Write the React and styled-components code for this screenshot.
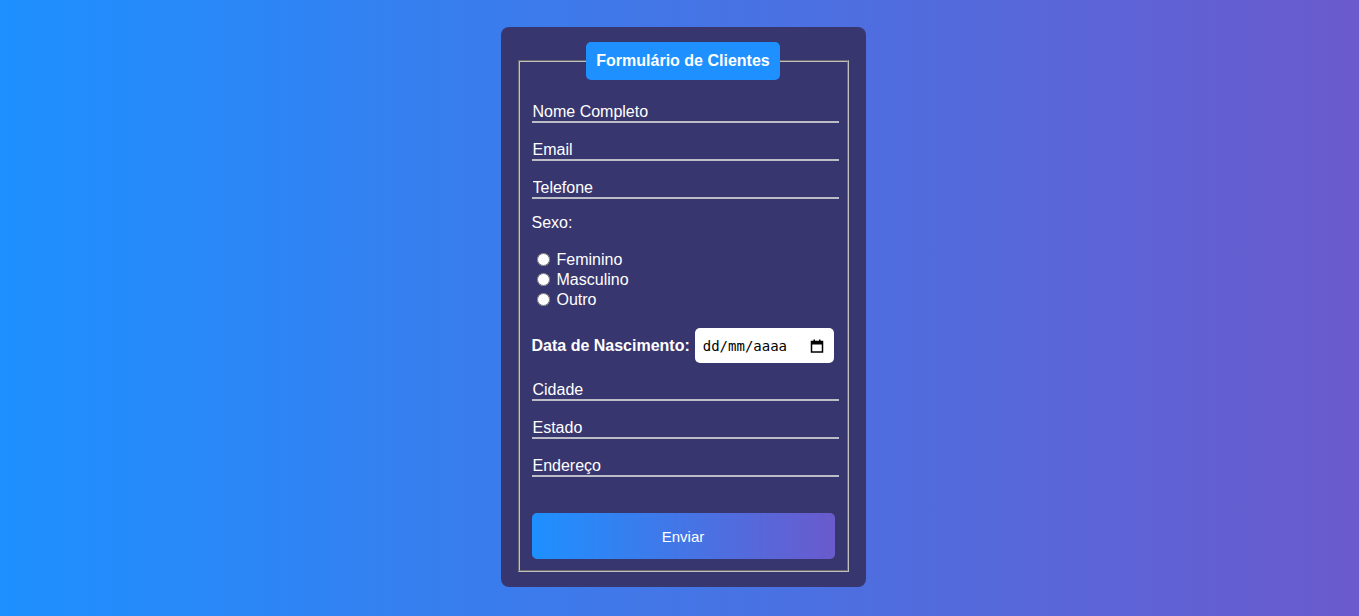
import React from 'react'
import styled, { createGlobalStyle } from 'styled-components'

const GlobalStyle = createGlobalStyle`
  * {
    box-sizing: border-box;
  }
  body {
    margin: 0;
    font-family: "Liberation Sans", Arial, sans-serif;
    background: linear-gradient(to right, #1e90ff, #6a5acd);
    min-height: 100vh;
  }
`

const Page = styled.div`
  min-height: 100vh;
  display: flex;
  align-items: flex-start;
  justify-content: center;
  padding: 27px 0 0 7px;
`

const Card = styled.form`
  width: 365px;
  background: #38366f;
  border-radius: 8px;
  padding: 15px;
`

const FieldsetSt = styled.fieldset`
  margin: 0 2px;
  border: 2px groove #c0c0c0;
  padding: 6px 12px 11px;
`

const Legend = styled.legend`
  margin: 0 auto;
  background: #1e90ff;
  color: white;
  font-weight: bold;
  font-size: 16px;
  padding: 10px;
  border-radius: 5px;
`

const Fields = styled.div`
  display: flex;
  flex-direction: column;
  padding-top: 15px;
`

const TextInput = styled.input`
  display: block;
  width: calc(100% + 4px);
  height: 22px;
  padding: 2px 2px 0 1px;
  margin: 0 0 ${p => p.$gap ?? 16}px;
  background: transparent;
  border: none;
  border-bottom: 2px solid #bdbdc8;
  color: white;
  font-family: "Liberation Sans", Arial, sans-serif;
  font-size: 16px;
  outline: none;

  &::placeholder {
    color: white;
    opacity: 1;
  }
`

const GroupLabel = styled.label`
  color: white;
  font-size: 16px;
  line-height: 18px;
  margin: 0 0 17px;
`

const RadioList = styled.div`
  display: flex;
  flex-direction: column;
  margin-bottom: 19px;
`

const RadioRow = styled.label`
  display: flex;
  align-items: center;
  height: 20px;
  color: white;
  font-size: 16px;
  padding-top: 1px;

  input {
    width: 13px;
    height: 13px;
    margin: 0 7px 0 5px;
  }
`

const DateRow = styled.div`
  display: flex;
  align-items: center;
  gap: 5px;
  margin-bottom: 16px;
`

const DateLabel = styled.label`
  color: white;
  font-weight: bold;
  font-size: 16px;
  white-space: nowrap;
`

const DateBox = styled.div`
  width: 139px;
  height: 35px;
  border-radius: 5px;
  background: white;
  display: flex;
  align-items: center;
  padding: 0 10px 0 8px;
`

const DateInput = styled.input`
  flex: 1;
  min-width: 0;
  border: none;
  background: transparent;
  padding: 0;
  font-family: "DejaVu Sans Mono", "Liberation Mono", monospace;
  font-size: 14px;
  color: black;
  outline: none;

  &::placeholder {
    color: black;
    opacity: 1;
  }
`

const Button = styled.button`
  margin-top: 36px;
  width: 100%;
  height: 46px;
  border: none;
  border-radius: 5px;
  background: linear-gradient(to right, #1e90ff, #6a5acd);
  color: white;
  font-family: "Liberation Sans", Arial, sans-serif;
  font-size: 15px;
  cursor: pointer;
`

const CalendarIcon = () => (
  <svg width="14" height="14" viewBox="0 0 14 14" aria-hidden="true">
    <rect x="1.5" y="2.5" width="11" height="10.5" fill="none" stroke="black" strokeWidth="1.5" />
    <rect x="1.5" y="2.5" width="11" height="3" fill="black" />
    <rect x="3.5" y="0.5" width="1.5" height="3" fill="black" />
    <rect x="9" y="0.5" width="1.5" height="3" fill="black" />
  </svg>
)

const App = () => {
  return (
    <>
      <GlobalStyle />
      <Page>
        <Card onSubmit={e => e.preventDefault()}>
          <FieldsetSt>
            <Legend>Formulário de Clientes</Legend>
            <Fields>
              <TextInput type="text" placeholder="Nome Completo" />
              <TextInput type="email" placeholder="Email" />
              <TextInput type="tel" placeholder="Telefone" $gap={15} />

              <GroupLabel>Sexo:</GroupLabel>
              <RadioList>
                <RadioRow><input type="radio" name="sexo" value="f" />Feminino</RadioRow>
                <RadioRow><input type="radio" name="sexo" value="m" />Masculino</RadioRow>
                <RadioRow><input type="radio" name="sexo" value="o" />Outro</RadioRow>
              </RadioList>

              <DateRow>
                <DateLabel htmlFor="nasc">Data de Nascimento:</DateLabel>
                <DateBox>
                  <DateInput id="nasc" type="text" placeholder="dd/mm/aaaa" />
                  <CalendarIcon />
                </DateBox>
              </DateRow>

              <TextInput type="text" placeholder="Cidade" />
              <TextInput type="text" placeholder="Estado" />
              <TextInput type="text" placeholder="Endereço" $gap={0} />

              <Button type="submit">Enviar</Button>
            </Fields>
          </FieldsetSt>
        </Card>
      </Page>
    </>
  )
}

export default App
